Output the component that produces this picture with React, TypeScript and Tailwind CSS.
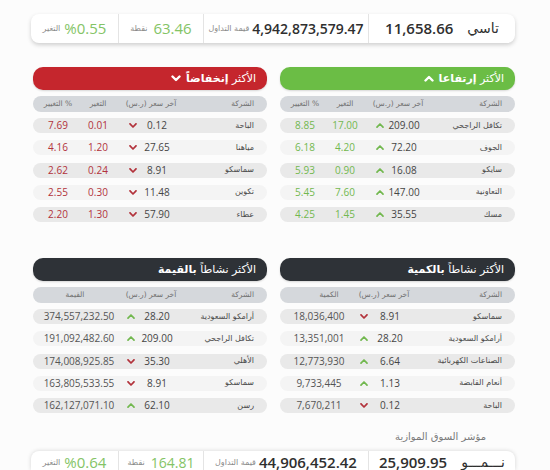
import React from "react";

const AR = "font-['DejaVu_Sans',sans-serif]";
const NUM = "font-['Open_Sans',sans-serif]";

function Chev({ up, className }: { up: boolean; className?: string }) {
  return (
    <svg width="8" height="5" viewBox="0 0 8 5" className={className}>
      <polyline
        points={up ? "1,4.2 4,1 7,4.2" : "1,0.8 4,4 7,0.8"}
        fill="none"
        stroke="currentColor"
        strokeWidth="1.7"
        strokeLinecap="round"
        strokeLinejoin="round"
      />
    </svg>
  );
}

function BigChev({ up }: { up: boolean }) {
  return (
    <svg width="10" height="7" viewBox="0 0 10 7">
      <polyline
        points={up ? "1.5,5.5 5,2 8.5,5.5" : "1.5,1.5 5,5 8.5,1.5"}
        fill="none"
        stroke="white"
        strokeWidth="2.4"
        strokeLinecap="round"
        strokeLinejoin="round"
      />
    </svg>
  );
}

type MoveRow = [string, string, string, string];

const gainers: MoveRow[] = [
  ["تكافل الراجحي", "209.00", "17.00", "8.85"],
  ["الجوف", "72.20", "4.20", "6.18"],
  ["سايكو", "16.08", "0.90", "5.93"],
  ["التعاونية", "147.00", "7.60", "5.45"],
  ["مسك", "35.55", "1.45", "4.25"],
];

const losers: MoveRow[] = [
  ["الباحة", "0.12", "0.01", "7.69"],
  ["مياهنا", "27.65", "1.20", "4.16"],
  ["سماسكو", "8.91", "0.24", "2.62"],
  ["تكوين", "11.48", "0.30", "2.55"],
  ["عطاء", "57.90", "1.30", "2.20"],
];

type ActRow = [string, string, boolean, string];

const byQty: ActRow[] = [
  ["سماسكو", "8.91", false, "18,036,400"],
  ["أرامكو السعودية", "28.20", true, "13,351,001"],
  ["الصناعات الكهربائية", "6.64", true, "12,773,930"],
  ["أنعام القابضة", "1.13", true, "9,733,445"],
  ["الباحة", "0.12", false, "7,670,211"],
];

const byValue: ActRow[] = [
  ["أرامكو السعودية", "28.20", true, "374,557,232.50"],
  ["تكافل الراجحي", "209.00", true, "191,092,482.60"],
  ["الأهلي", "35.30", false, "174,008,925.85"],
  ["سماسكو", "8.91", false, "163,805,533.55"],
  ["رسن", "62.10", true, "162,127,071.10"],
];

const rowBg = ["bg-[#e9e9e9]", "bg-[#f4f4f4]", "bg-[#e9e9e9]", "bg-[#f4f4f4]", "bg-[#e9e9e9]"];

function PriceHdr({ w }: { w: string }) {
  return (
    <span className={`${w} flex justify-center whitespace-nowrap`}>
      <span dir="rtl" className={`${AR}`}>آخر سعر (ر.س)</span>
    </span>
  );
}

function MoverPanel({ up, rows }: { up: boolean; rows: MoveRow[] }) {
  const color = up ? "text-[#72b84f]" : "text-[#b2323b]";
  return (
    <div className="flex flex-col">
      <div
        className={`h-[23px] rounded-[10px] flex items-center justify-end gap-[5px] pr-[11px] text-white shadow-[0_1px_2px_rgba(0,0,0,0.15)] ${
          up ? "bg-[#6bbd45]" : "bg-[#c5262d]"
        }`}
      >
        <BigChev up={up} />
        <span dir="rtl" className={`${AR} text-[11px] leading-none`}>
          الأكثر <b>{up ? "إرتفاعا" : "إنخفاضاً"}</b>
        </span>
      </div>
      <div className="mt-[6px] h-[16px] rounded-full bg-[#d5d8dc] flex items-center text-[#707070] text-[7.5px]">
        <span dir="ltr" className={`${AR} w-[50px] text-center whitespace-nowrap`}>التغيير %</span>
        <span className={`${AR} w-[30px] text-center`}>التغير</span>
        <span className="w-[14px]" />
        <PriceHdr w="w-[48px]" />
        <span className={`${AR} flex-1 text-right pr-[13px]`}>الشركة</span>
      </div>
      <div className="mt-[6px] flex flex-col gap-[7.25px]">
        {rows.map((r, i) => (
          <div key={i} className={`h-[15px] rounded-full ${rowBg[i]} flex items-center`}>
            <span className={`${NUM} ${color} w-[50px] text-center text-[10px]`}>{r[3]}</span>
            <span className={`${NUM} ${color} w-[30px] text-center text-[10px]`}>{r[2]}</span>
            <span className={`ml-[14px] w-[12px] flex justify-center ${color}`}>
              <Chev up={up} />
            </span>
            <span className={`${NUM} text-[#454545] w-[36px] text-center text-[10px]`}>{r[1]}</span>
            <span className={`${AR} flex-1 text-right pr-[13px] text-[8px] text-[#4a4a4a] whitespace-nowrap`}>{r[0]}</span>
          </div>
        ))}
      </div>
    </div>
  );
}

function ActivePanel({
  title,
  col,
  rows,
  aW,
  hdrPad,
}: {
  title: string;
  col: string;
  rows: ActRow[];
  aW: string;
  hdrPad: string;
}) {
  return (
    <div className="flex flex-col">
      <div className="h-[23px] rounded-[10px] bg-[#2e3237] flex items-center justify-end pr-[11px] text-white shadow-[0_1px_2px_rgba(0,0,0,0.15)]">
        <span dir="rtl" className={`${AR} text-[11px] leading-none`}>
          الأكثر نشاطاً <b>{title}</b>
        </span>
      </div>
      <div className="mt-[6px] h-[16px] rounded-full bg-[#d5d8dc] flex items-center text-[#707070] text-[7.5px]">
        <span className={`${AR} ${aW} ${hdrPad} text-center`}>{col}</span>
        <PriceHdr w="w-[52px]" />
        <span className={`${AR} flex-1 text-right pr-[13px]`}>الشركة</span>
      </div>
      <div className="mt-[6px] flex flex-col gap-[7.25px]">
        {rows.map((r, i) => (
          <div key={i} className={`h-[15px] rounded-full ${rowBg[i]} flex items-center`}>
            <span className={`${NUM} ${aW} text-center text-[10px] text-[#555]`}>{r[3]}</span>
            <span className={`w-[12px] flex justify-center ${r[2] ? "text-[#72b84f]" : "text-[#b2323b]"}`}>
              <Chev up={r[2]} />
            </span>
            <span className={`${NUM} text-[#454545] w-[40px] text-center text-[10px]`}>{r[1]}</span>
            <span className={`${AR} flex-1 text-right pr-[13px] text-[8px] text-[#4a4a4a] whitespace-nowrap`}>{r[0]}</span>
          </div>
        ))}
      </div>
    </div>
  );
}

function IndexBar({
  name,
  value,
  turnover,
  points,
  change,
  bottom,
}: {
  name: string;
  value: string;
  turnover: string;
  points: string;
  change: string;
  bottom?: boolean;
}) {
  const box = bottom
    ? "h-[19px] rounded-t-[8px] shadow-[0_0_4px_rgba(0,0,0,0.16)]"
    : "h-[29px] rounded-[8px] shadow-[0_2px_4px_rgba(0,0,0,0.18)]";
  const al = bottom ? "items-end" : "items-center";
  const lead = bottom ? "leading-none" : "";
  return (
    <div className={`${box} w-[484px] bg-white flex`} dir="ltr">
      <div className={`w-[88px] flex ${al} justify-center gap-[4px] border-r border-[#e4e4e4]`}>
        <span className={`${AR} ${lead} text-[8px] text-[#8a8a8a] ${bottom ? "pb-[3px]" : ""}`}>التغير</span>
        <span className={`${NUM} ${lead} text-[15px] text-[#84c466]`}>{change}</span>
      </div>
      <div className={`w-[85px] flex ${al} justify-center gap-[6px] border-r border-[#e4e4e4]`}>
        <span className={`${AR} ${lead} text-[8px] text-[#8a8a8a] ${bottom ? "pb-[3px]" : ""}`}>نقطة</span>
        <span className={`${NUM} ${lead} ${bottom ? "text-[14px]" : "text-[15px]"} text-[#84c466]`}>{points}</span>
      </div>
      <div className={`w-[165px] flex ${al} justify-center gap-[3px] border-r border-[#e4e4e4]`}>
        <span className={`${AR} ${lead} text-[8px] text-[#8a8a8a] ${bottom ? "pb-[3px]" : ""}`}>قيمة التداول</span>
        <span className={`${NUM} ${lead} font-semibold ${bottom ? "text-[15px]" : "text-[14px]"} text-[#2f2f2f]`}>{turnover}</span>
      </div>
      <div className={`flex-1 flex ${al} justify-center gap-[14px]`}>
        <span className={`${NUM} ${lead} font-semibold text-[15px] text-[#2f2f2f]`}>{value}</span>
        <span className={`${AR} ${lead} text-[14px] text-[#2f2f2f] ${bottom ? "pb-[1px]" : ""}`}>{name}</span>
      </div>
    </div>
  );
}

export default function App() {
  return (
    <div className="w-[550px] h-[470px] overflow-hidden bg-[#fcfcfc] flex flex-col">
      <div className="ml-[31px] mt-[14px]">
        <IndexBar name="تاسي" value="11,658.66" turnover="4,942,873,579.47" points="63.46" change="%0.55" />
      </div>
      <div className="ml-[33px] mt-[24px] flex gap-[13px]">
        <div className="w-[234px]">
          <MoverPanel up={false} rows={losers} />
        </div>
        <div className="w-[235px]">
          <MoverPanel up={true} rows={gainers} />
        </div>
      </div>
      <div className="ml-[33px] mt-[36px] flex gap-[13px]">
        <div className="w-[234px]">
          <ActivePanel title="بالقيمة" col="القيمة" rows={byValue} aW="w-[92px]" hdrPad="pr-[8px]" />
        </div>
        <div className="w-[235px]">
          <ActivePanel title="بالكمية" col="الكمية" rows={byQty} aW="w-[78px]" hdrPad="pl-[20px]" />
        </div>
      </div>
      <div className={`${AR} mt-[18px] mr-[64px] text-right text-[10px] text-[#7a7a7a] leading-[12px]`} dir="rtl">
        مؤشر السوق الموازية
      </div>
      <div className="ml-[31px] mt-[8px]">
        <IndexBar
          name="نـــمـــو"
          value="25,909.95"
          turnover="44,906,452.42"
          points="164.81"
          change="%0.64"
          bottom
        />
      </div>
    </div>
  );
}
